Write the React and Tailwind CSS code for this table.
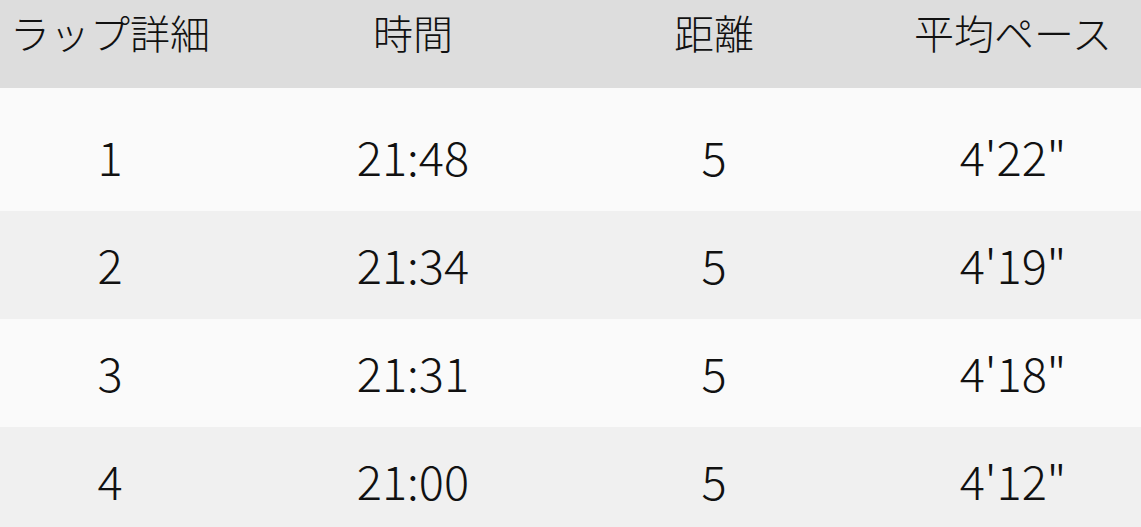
import React from "react";

const rows = [
  ["1", "21:48", "5", "4'22\""],
  ["2", "21:34", "5", "4'19\""],
  ["3", "21:31", "5", "4'18\""],
  ["4", "21:00", "5", "4'12\""],
];

export default function App() {
  return (
    <div
      className="w-[1141px] h-[527px] overflow-hidden bg-[#fafafa] text-[#111111] font-light"
      style={{ fontFamily: '"Noto Sans CJK JP", "Noto Sans", sans-serif' }}
    >
      <div className="grid grid-cols-[220px_386px_216px_1fr] h-[88px] bg-[#dddddd] pt-[12px] text-[40px] leading-[40px]">
        <div className="text-center">ラップ詳細</div>
        <div className="text-center">時間</div>
        <div className="text-center">距離</div>
        <div className="text-center pl-[63px]">平均ペース</div>
      </div>
      <div className="pt-[15px]">
        {rows.map((r, i) => (
          <div
            key={i}
            className={`grid grid-cols-[220px_386px_216px_1fr] h-[108px] items-center pb-[4px] text-[47px] leading-[47px] ${
              i % 2 === 1 ? "bg-[#f0f0f0]" : "bg-[#fafafa]"
            }`}
          >
            <div className="text-center">{r[0]}</div>
            <div className="text-center">{r[1]}</div>
            <div className="text-center">{r[2]}</div>
            <div className="text-center pl-[63px]">{r[3]}</div>
          </div>
        ))}
      </div>
    </div>
  );
}
